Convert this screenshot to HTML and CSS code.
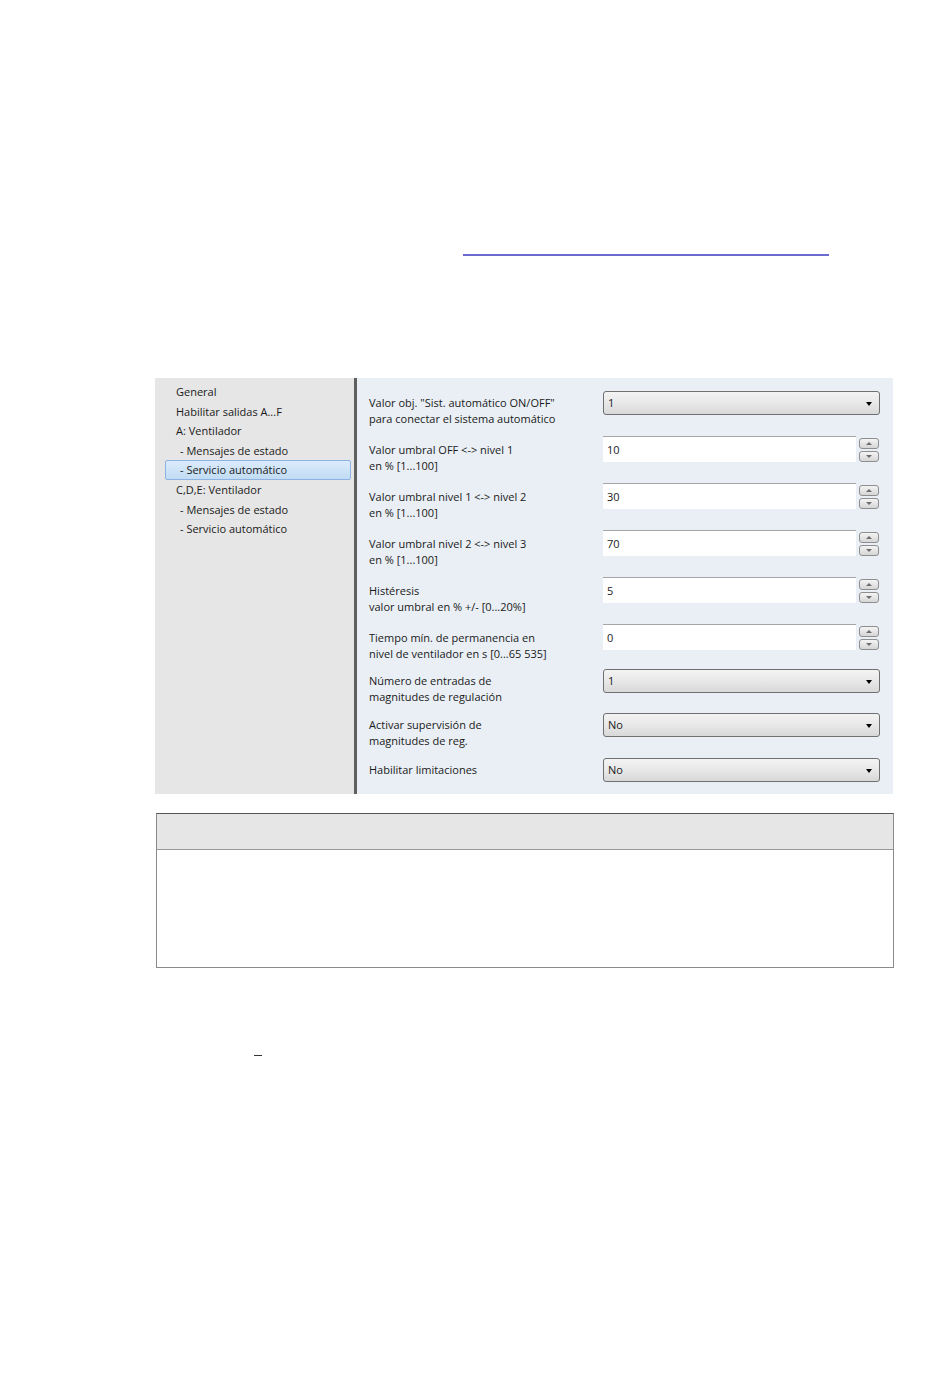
FILE: index.html
```html
<!DOCTYPE html>
<html lang="es">
<head>
    <meta charset="UTF-8">
    <title>Servicio automático</title>
    <link rel="stylesheet" href="styles.css">
</head>
<body>
    <div class="page">
        <div class="link-rule"></div>

        <div class="dialog">
            <div class="nav">
                <div class="nav-item">General</div>
                <div class="nav-item">Habilitar salidas A...F</div>
                <div class="nav-item">A: Ventilador</div>
                <div class="nav-item sub">- Mensajes de estado</div>
                <div class="nav-item sub selected">- Servicio automático</div>
                <div class="nav-item">C,D,E: Ventilador</div>
                <div class="nav-item sub">- Mensajes de estado</div>
                <div class="nav-item sub">- Servicio automático</div>
            </div>
            <div class="params">
                <div class="row row-select">
                    <div class="label">Valor obj. "Sist. automático ON/OFF"<br>para conectar el sistema automático</div>
                    <div class="select">1<span class="arrow"></span></div>
                </div>
                <div class="row row-spin">
                    <div class="label">Valor umbral OFF &lt;-&gt; nivel 1<br>en % [1...100]</div>
                    <div class="spin-field">
                        <div class="input">10</div>
                        <div class="spin"><span class="btn up"></span><span class="btn down"></span></div>
                    </div>
                </div>
                <div class="row row-spin">
                    <div class="label">Valor umbral nivel 1 &lt;-&gt; nivel 2<br>en % [1...100]</div>
                    <div class="spin-field">
                        <div class="input">30</div>
                        <div class="spin"><span class="btn up"></span><span class="btn down"></span></div>
                    </div>
                </div>
                <div class="row row-spin">
                    <div class="label">Valor umbral nivel 2 &lt;-&gt; nivel 3<br>en % [1...100]</div>
                    <div class="spin-field">
                        <div class="input">70</div>
                        <div class="spin"><span class="btn up"></span><span class="btn down"></span></div>
                    </div>
                </div>
                <div class="row row-spin">
                    <div class="label">Histéresis<br>valor umbral en % +/- [0...20%]</div>
                    <div class="spin-field">
                        <div class="input">5</div>
                        <div class="spin"><span class="btn up"></span><span class="btn down"></span></div>
                    </div>
                </div>
                <div class="row row-spin row-short">
                    <div class="label">Tiempo mín. de permanencia en<br>nivel de ventilador en s [0...65 535]</div>
                    <div class="spin-field">
                        <div class="input">0</div>
                        <div class="spin"><span class="btn up"></span><span class="btn down"></span></div>
                    </div>
                </div>
                <div class="row row-last">
                    <div class="label">Número de entradas de<br>magnitudes de regulación</div>
                    <div class="select">1<span class="arrow"></span></div>
                </div>
                <div class="row row-select">
                    <div class="label">Activar supervisión de<br>magnitudes de reg.</div>
                    <div class="select">No<span class="arrow"></span></div>
                </div>
                <div class="row row-select">
                    <div class="label">Habilitar limitaciones</div>
                    <div class="select">No<span class="arrow"></span></div>
                </div>
            </div>
        </div>

        <div class="info-box">
            <div class="info-head"></div>
            <div class="info-body"></div>
        </div>

        <div class="dash"></div>
    </div>
</body>
</html>
```

FILE: styles.css
```css
body {
    margin: 0;
    background-color: #ffffff;
    font-family: 'Open Sans', 'Noto Sans', sans-serif;
    font-size: 11px;
    color: #1a1a1a;
}
.page {
    width: 950px;
    height: 1378px;
    padding-top: 254px;
    box-sizing: border-box;
}
.link-rule {
    margin-left: 463px;
    width: 366px;
    height: 2px;
    background-color: #6a6ad0;
}

/* dialog */
.dialog {
    display: flex;
    margin-top: 122px;
    margin-left: 155px;
    width: 738px;
    height: 416px;
}
.nav {
    width: 199px;
    background-color: #e6e6e6;
    padding-top: 4px;
    box-sizing: border-box;
}
.nav-item {
    height: 19.5px;
    line-height: 19.5px;
    padding-left: 21px;
    white-space: nowrap;
}
.nav-item.sub {
    padding-left: 25px;
}
.nav-item.selected {
    margin-left: 10px;
    margin-right: 3px;
    padding-left: 14px;
    height: 18px;
    line-height: 18px;
    border: 1px solid #8db2e3;
    border-radius: 2px;
    background: linear-gradient(#dcebfc, #c1dcf3);
}
.params {
    flex: 1;
    background-color: #e9eff5;
    border-left: 3px solid #5f5f5f;
    padding: 13px 13px 0 12px;
}
.row {
    display: flex;
    align-items: flex-start;
}
.row-select { height: 45px; }
.row-spin { height: 47px; }
.row-spin.row-short { height: 45px; }
.row-last { height: 44px; }
.label {
    width: 234px;
    padding-top: 4px;
    line-height: 15.5px;
}
.row-spin .label {
    padding-top: 6px;
}
.select {
    position: relative;
    width: 277px;
    height: 24px;
    line-height: 22px;
    box-sizing: border-box;
    padding-left: 4px;
    border: 1px solid #707070;
    border-radius: 3px;
    background: linear-gradient(#f3f3f3 0%, #e8e8e8 50%, #d8d8d8 100%);
}
.arrow {
    position: absolute;
    right: 7px;
    top: 10px;
    border-left: 3px solid transparent;
    border-right: 3px solid transparent;
    border-top: 4px solid #000;
}
.spin-field {
    display: flex;
    gap: 3px;
}
.input {
    width: 253px;
    height: 26px;
    line-height: 26px;
    box-sizing: border-box;
    padding-left: 4px;
    background-color: #ffffff;
    border-top: 1px solid #a5a5a5;
}
.spin {
    display: flex;
    flex-direction: column;
    gap: 2px;
    padding-top: 2px;
}
.btn {
    position: relative;
    width: 20px;
    height: 11px;
    box-sizing: border-box;
    border: 1px solid #8e8e8e;
    border-radius: 3px;
    background: linear-gradient(#f4f4f4, #d6d6d6);
}
.btn::after {
    content: "";
    position: absolute;
    left: 6px;
    top: 3px;
    border-left: 3px solid transparent;
    border-right: 3px solid transparent;
}
.btn.up::after { border-bottom: 3px solid #6d6d6d; }
.btn.down::after { border-top: 3px solid #6d6d6d; }

/* info box */
.info-box {
    margin-top: 19px;
    margin-left: 156px;
    width: 738px;
    height: 155px;
    box-sizing: border-box;
    border: 1px solid #8a8a8a;
    border-top-color: #555;
}
.info-head {
    height: 35px;
    background-color: #e6e6e6;
    border-bottom: 1px solid #9a9a9a;
}
.dash {
    margin-top: 87px;
    margin-left: 254px;
    width: 8px;
    height: 1px;
    background-color: #333;
}
```
